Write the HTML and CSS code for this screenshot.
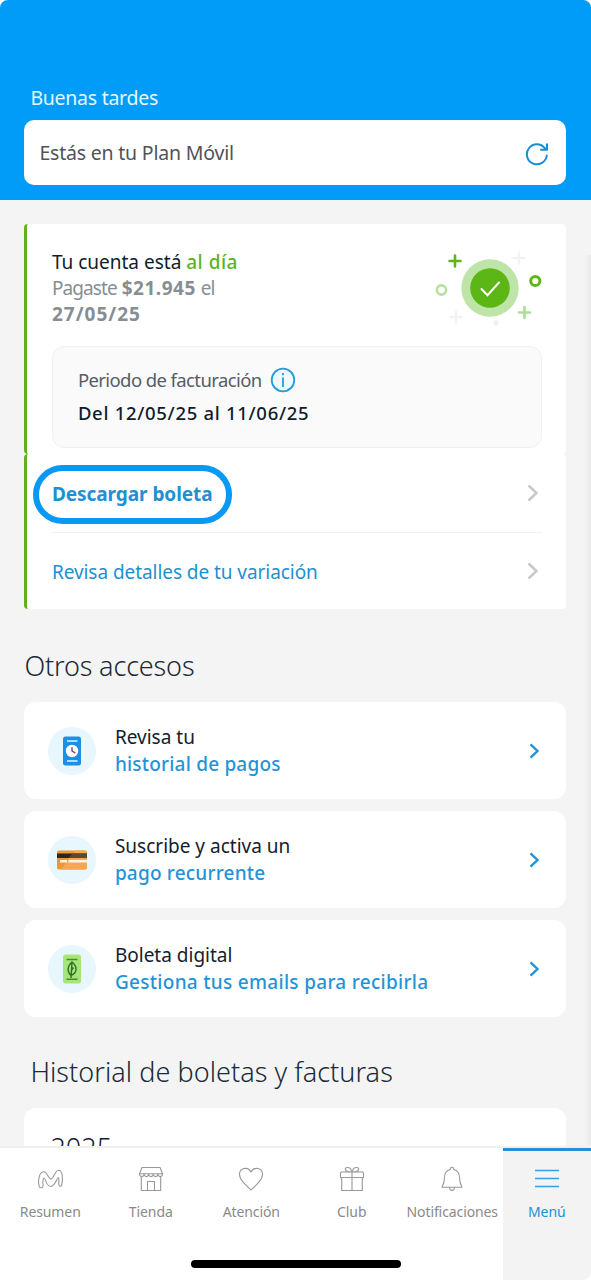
FILE: index.html
```html
<!DOCTYPE html>
<html lang="es">
<head>
<meta charset="utf-8">
<title>Mi Plan Móvil</title>
<link rel="stylesheet" href="styles.css">
</head>
<body>
<div class="app">
  <header class="header">
    <p class="greeting"><span>Buenas tardes</span></p>
    <div class="plan">
      <span class="plan-text">Estás en tu Plan Móvil</span>
      <svg class="refresh" width="24" height="24" viewBox="0 0 24 24" fill="none" stroke="#1b8bd2" stroke-width="2" stroke-linecap="round" stroke-linejoin="round"><path d="M21.800 13.500A10 10 0 1 1 19.800 6.200L21.500 7.600M22 2.200V7.800H16"/></svg>
    </div>
  </header>

  <main class="content">
    <section class="account">
      <div class="account-top">
        <div class="status">
          <div class="status-text">
            <p class="line dark"><span>Tu cuenta está <span class="green">al día</span></span></p>
            <p class="line grey"><span class="paid">Pagaste</span> <b class="amount">$21.945</b> <span class="paid">el</span></p>
            <p class="line grey"><b class="date">27/05/25</b></p>
          </div>
          <svg class="badge" width="112" height="80" viewBox="0 0 112 80" fill="none" stroke-linecap="round">
            <circle cx="57" cy="41" r="28.7" fill="#bfe4a8"/>
            <circle cx="57" cy="41" r="19.8" fill="#5cb615"/>
            <path d="M48.500 42l6 6.200L66 35.500" stroke="#fff" stroke-width="2"/>
            <path d="M22 8.500v11M16.500 14h11" stroke="#5cb615" stroke-width="2.600"/>
            <path d="M91.500 60v11M86 65.500h11" stroke="#b0dd95" stroke-width="2.600"/>
            <path d="M86 5.500v11M80.500 11h11M23 64.500v11M17.500 70h11" stroke="#f3f3f3" stroke-width="2.400"/>
            <circle cx="102.300" cy="34" r="4.600" stroke="#5cb615" stroke-width="3"/>
            <circle cx="8.500" cy="43" r="4.600" stroke="#b8dfa0" stroke-width="2.600"/>
            <circle cx="63" cy="76" r="2.700" fill="#f2f2f2"/>
          </svg>
        </div>
        <div class="period">
          <p class="period-label"><span>Periodo de facturación</span>
            <svg width="26" height="26" viewBox="0 0 26 26" fill="none" stroke="#269bd9"><circle cx="13" cy="13" r="11.300" fill="#eef8fe" stroke-width="1.800"/><path d="M13 10.500v9.500M13 6v2.300" stroke-width="1.800"/></svg>
          </p>
          <p class="period-dates"><span>Del 12/05/25 al 11/06/25</span></p>
        </div>
      </div>
      <div class="account-links">
        <a class="row strong"><span>Descargar boleta</span><svg width="12" height="18" viewBox="0 0 12 18" fill="none" stroke="#c6c8cb" stroke-width="2.500"><path d="M1.500 1.500L9.500 9l-8 7.500"/></svg></a>
        <a class="row"><span>Revisa detalles de tu variación</span><svg width="12" height="18" viewBox="0 0 12 18" fill="none" stroke="#c6c8cb" stroke-width="2.500"><path d="M1.500 1.500L9.500 9l-8 7.500"/></svg></a>
        <span class="highlight"></span>
      </div>
    </section>

    <h2 class="title"><span>Otros accesos</span></h2>
    <div class="cards">
      <a class="card">
        <svg width="48" height="48" viewBox="0 0 48 48"><circle cx="24" cy="24" r="24" fill="#e8f6fe"/><rect x="15" y="9.500" width="18" height="29" rx="2.500" fill="#1c90e6"/><path d="M19 14h10.500M19 34h10.500" stroke="#a9e2ff" stroke-width="1.800"/><circle cx="24" cy="24" r="6.200" fill="#fff"/><path d="M24 20.300v3.600l3.300 2.200" fill="none" stroke="#96437c" stroke-width="1.500"/></svg>
        <div class="card-text"><p><span>Revisa tu</span></p><p class="link"><span>historial de pagos</span></p></div>
        <svg width="12" height="18" viewBox="0 0 12 18"><path d="M1.500 2.300L8.500 9l-7 6.700" fill="none" stroke="#1f94d8" stroke-width="2.400"/></svg>
      </a>
      <a class="card">
        <svg width="48" height="48" viewBox="0 0 48 48"><circle cx="24" cy="24" r="24" fill="#e8f6fe"/><rect x="9" y="14.500" width="30" height="19" rx="2" fill="#ec9638"/><path d="M27 14.500h10a2 2 0 0 1 2 2V31.500a2 2 0 0 1-2 2H13z" fill="#f3a757"/><path d="M9 17.500h30v4.500H9z" fill="#29251f"/><path d="M24.500 17.500H39v4.500H20.500z" fill="#5b4930"/><path d="M12 24h7v2.600h-7zM20.500 24H39v2.600H20.500z" fill="#fff1df"/></svg>
        <div class="card-text"><p><span>Suscribe y activa un</span></p><p class="link"><span>pago recurrente</span></p></div>
        <svg width="12" height="18" viewBox="0 0 12 18"><path d="M1.500 2.300L8.500 9l-7 6.700" fill="none" stroke="#1f94d8" stroke-width="2.400"/></svg>
      </a>
      <a class="card">
        <svg width="48" height="48" viewBox="0 0 48 48"><circle cx="24" cy="24" r="24" fill="#e8f6fe"/><rect x="15" y="9.500" width="18" height="29" rx="2.500" fill="#a6e678"/><path d="M18.500 14.500h11M18.500 34.200h11" stroke="#4b8c32" stroke-width="1.500"/><path d="M24 17c-5 4.500-5 9.500-1 13.500 6-2.500 7-8.500 1-13.500zM24 17l-1 16M23.300 25.500l2.200-3" fill="none" stroke="#35702a" stroke-width="1.400"/></svg>
        <div class="card-text"><p><span>Boleta digital</span></p><p class="link wide"><span>Gestiona tus emails para recibirla</span></p></div>
        <svg width="12" height="18" viewBox="0 0 12 18"><path d="M1.500 2.300L8.500 9l-7 6.700" fill="none" stroke="#1f94d8" stroke-width="2.400"/></svg>
      </a>
    </div>

    <h2 class="title history-title"><span>Historial de boletas y facturas</span></h2>
    <div class="history"><span>2025</span></div>
  </main>

  <nav class="nav">
    <a class="tab"><svg width="28" height="28" viewBox="0 0 28 28"><path d="M3.200 21.500C1.600 15.500 3 7.500 7.500 6.800c3.700-.5 4.800 7.200 7.300 7.200 2.700 0 4-8.500 7.700-8.800 4.300-.3 4.600 9.300 3.200 14.800-.8 2-2.800 1.500-3-1 .3-3.500.3-6.500-.4-6.500-1.300 0-3 9-7.500 9S9.500 13 8 13c-1.200 0-1.300 4.500-.9 7.500.2 2.300-3 3.200-3.900 1z"/></svg><span>Resumen</span></a>
    <a class="tab"><svg width="28" height="28" viewBox="0 0 28 28"><path d="M5 2.500h18l2.500 6.300H2.500zM2.500 8.800c0 4 4.600 3.500 4.600 0 0 4 4.600 3.500 4.600 0 0 4 4.600 3.500 4.600 0 0 4 4.600 3.500 4.600 0 0 4 4.600 3.500 4.600 0M4.300 12v13.500h19.400V12M10.500 25.500v-9h7v9"/></svg><span>Tienda</span></a>
    <a class="tab"><svg width="28" height="28" viewBox="0 0 28 28"><path d="M14 25C8 19.500 2.500 14.500 2.500 9.200 2.500 3 11 1 14 7c3-6 11.500-4 11.500 2.200C25.500 14.500 20 19.500 14 25z"/></svg><span>Atención</span></a>
    <a class="tab"><svg width="28" height="28" viewBox="0 0 28 28"><path d="M3.500 7h21l1 1v4.500H2.500V8zM3.700 12.500v13h20.600v-13M14 7v18.500M13.500 7C6 7 6 2.500 9.500 2.500c2.500 0 4 2 4 4.500zM14.500 7c7.500 0 7.500-4.500 4-4.500-2.500 0-4 2-4 4.500z"/></svg><span>Club</span></a>
    <a class="tab"><svg width="28" height="28" viewBox="0 0 28 28"><path d="M12.200 4.500c0-3 3.600-3 3.600 0 4 1 5.700 4 5.700 8 0 5 .8 6.500 2.500 9.700H4c1.700-3.200 2.500-4.700 2.500-9.700 0-4 1.700-7 5.700-8zM11.500 22.200c0 4.200 5 4.200 5 0"/></svg><span>Notificaciones</span></a>
    <a class="tab active"><svg width="28" height="28" viewBox="0 0 28 28"><path d="M2 5.500h24M2 13.500h24M2 21.500h24" stroke-width="1.300"/></svg><span>Menú</span></a>
    <span class="home-bar"></span>
  </nav>
  <span class="edge"></span>
</div>
</body>
</html>
```
FILE: styles.css
```css
* { box-sizing: border-box; }
body { margin: 0; font-family: "Noto Sans", "Open Sans", sans-serif; background: #fff; }
p, h2 { margin: 0; }
span { white-space: nowrap; }
svg { display: block; flex: none; }

.app { position: relative; width: 591px; height: 1280px; display: flex; flex-direction: column; overflow: hidden; border-radius: 8px; background: #f4f4f4; }

.header { flex: none; height: 199.5px; padding: 82px 24.6px 0 24.4px; background: #019cf7; }
.greeting { height: 38px; padding-left: 6px; font-size: 19.5px; line-height: 32px; letter-spacing: -0.27px; color: #e6f7ff; }
.plan { display: flex; align-items: center; justify-content: space-between; height: 64.5px; padding: 0 17px 0 15px; background: #fff; border-radius: 10px; }
.plan-text { padding-top: 2px; font-size: 19.5px; line-height: 30px; letter-spacing: -0.2px; color: #505358; }
.refresh { margin-top: 4px; }

.content { flex: 1; min-height: 0; overflow: hidden; padding: 24.5px 24.6px 0 24.4px; }
.account-top, .account-links { border-left: 3px solid #5fb124; border-radius: 4px; background: #fff; }
.account-top { height: 230px; padding: 25px 24px 0 24.5px; }
.status { display: flex; justify-content: space-between; height: 97px; }
.line { height: 26px; line-height: 27px; font-size: 19px; }
.dark { color: #0f1c2d; }
.grey { color: #868e94; }
.green { letter-spacing: 0.5px; font-weight: 500; color: #5cb41c; }
.paid { letter-spacing: -0.9px; }
.amount { letter-spacing: 0.5px; }
.date { letter-spacing: 1px; }
.badge { margin: -2.5px -2.5px 0 0; }
.period { height: 102px; padding: 17px 25px; border: 1.5px solid #f0f1f1; border-radius: 12px; background: #fafafa; }
.period-label { display: flex; align-items: center; gap: 8.5px; height: 31px; font-size: 18.5px; letter-spacing: -0.6px; color: #555d68; }
.period-dates { height: 34px; line-height: 35px; font-size: 18.5px; font-weight: 500; letter-spacing: 0.7px; color: #0f1c2d; }

.account-links { position: relative; height: 155px; padding: 0 24px 0 24.5px; }
.row { display: flex; align-items: center; justify-content: space-between; height: 78px; padding-right: 3.5px; font-size: 19px; letter-spacing: -0.06px; color: #2090d2; }
.row span:first-child { padding-top: 1px; }
.row + .row { height: 77px; border-top: 1.5px solid #f2f2f2; }
.strong { font-weight: 700; }
.highlight { position: absolute; left: 5.5px; top: 10.5px; width: 199px; height: 59px; border: 6px solid #0799f3; border-radius: 30px; }

.title { height: 93px; padding-top: 37px; line-height: 40px; font-size: 27px; font-weight: 300; letter-spacing: -0.15px; color: #1a2a38; }
.cards { display: grid; gap: 12.2px; }
.card { display: flex; align-items: center; height: 97px; padding: 0 25.5px 0 24px; background: #fff; border-radius: 12px; font-size: 19px; color: #14202f; }
.card-text { flex: 1; padding: 1px 0 0 18.5px; line-height: 27px; }
.card-text p { height: 27px; }
.link { font-weight: 500; letter-spacing: 0.2px; color: #1f94d8; }
.wide { letter-spacing: 0.3px; }
.history-title { height: 91px; padding: 35px 0 0 6px; letter-spacing: 0.05px; }
.history { height: 80px; padding: 22px 26px; background: #fff; border-radius: 12px 12px 0 0; font-size: 27px; line-height: 36px; font-weight: 300; color: #0f1c2d; }

.nav { position: relative; flex: none; display: flex; height: 134px; border-top: 2px solid #efefef; background: #fff; }
.tab { display: flex; flex-direction: column; align-items: center; width: 100.5px; height: 132px; padding-top: 17px; font-size: 14px; letter-spacing: -0.1px; color: #8a8a8a; }
.tab svg { fill: none; stroke: #999; stroke-width: 1.1; stroke-linejoin: round; }
.tab span { margin-top: 9px; line-height: 20px; }
.active { width: 88.5px; padding-top: 14px; border-top: 3px solid #228fd8; background: #f3f3f3; color: #2090d2; }
.active svg { stroke: #36a0de; }
.home-bar { position: absolute; left: 190.5px; top: 112px; width: 210.5px; height: 8px; border-radius: 4px; background: #000; }
.edge { position: absolute; right: 0; top: 255px; width: 6px; height: 890px; background: linear-gradient(90deg, transparent, rgba(0,0,0,.05)); }
```
